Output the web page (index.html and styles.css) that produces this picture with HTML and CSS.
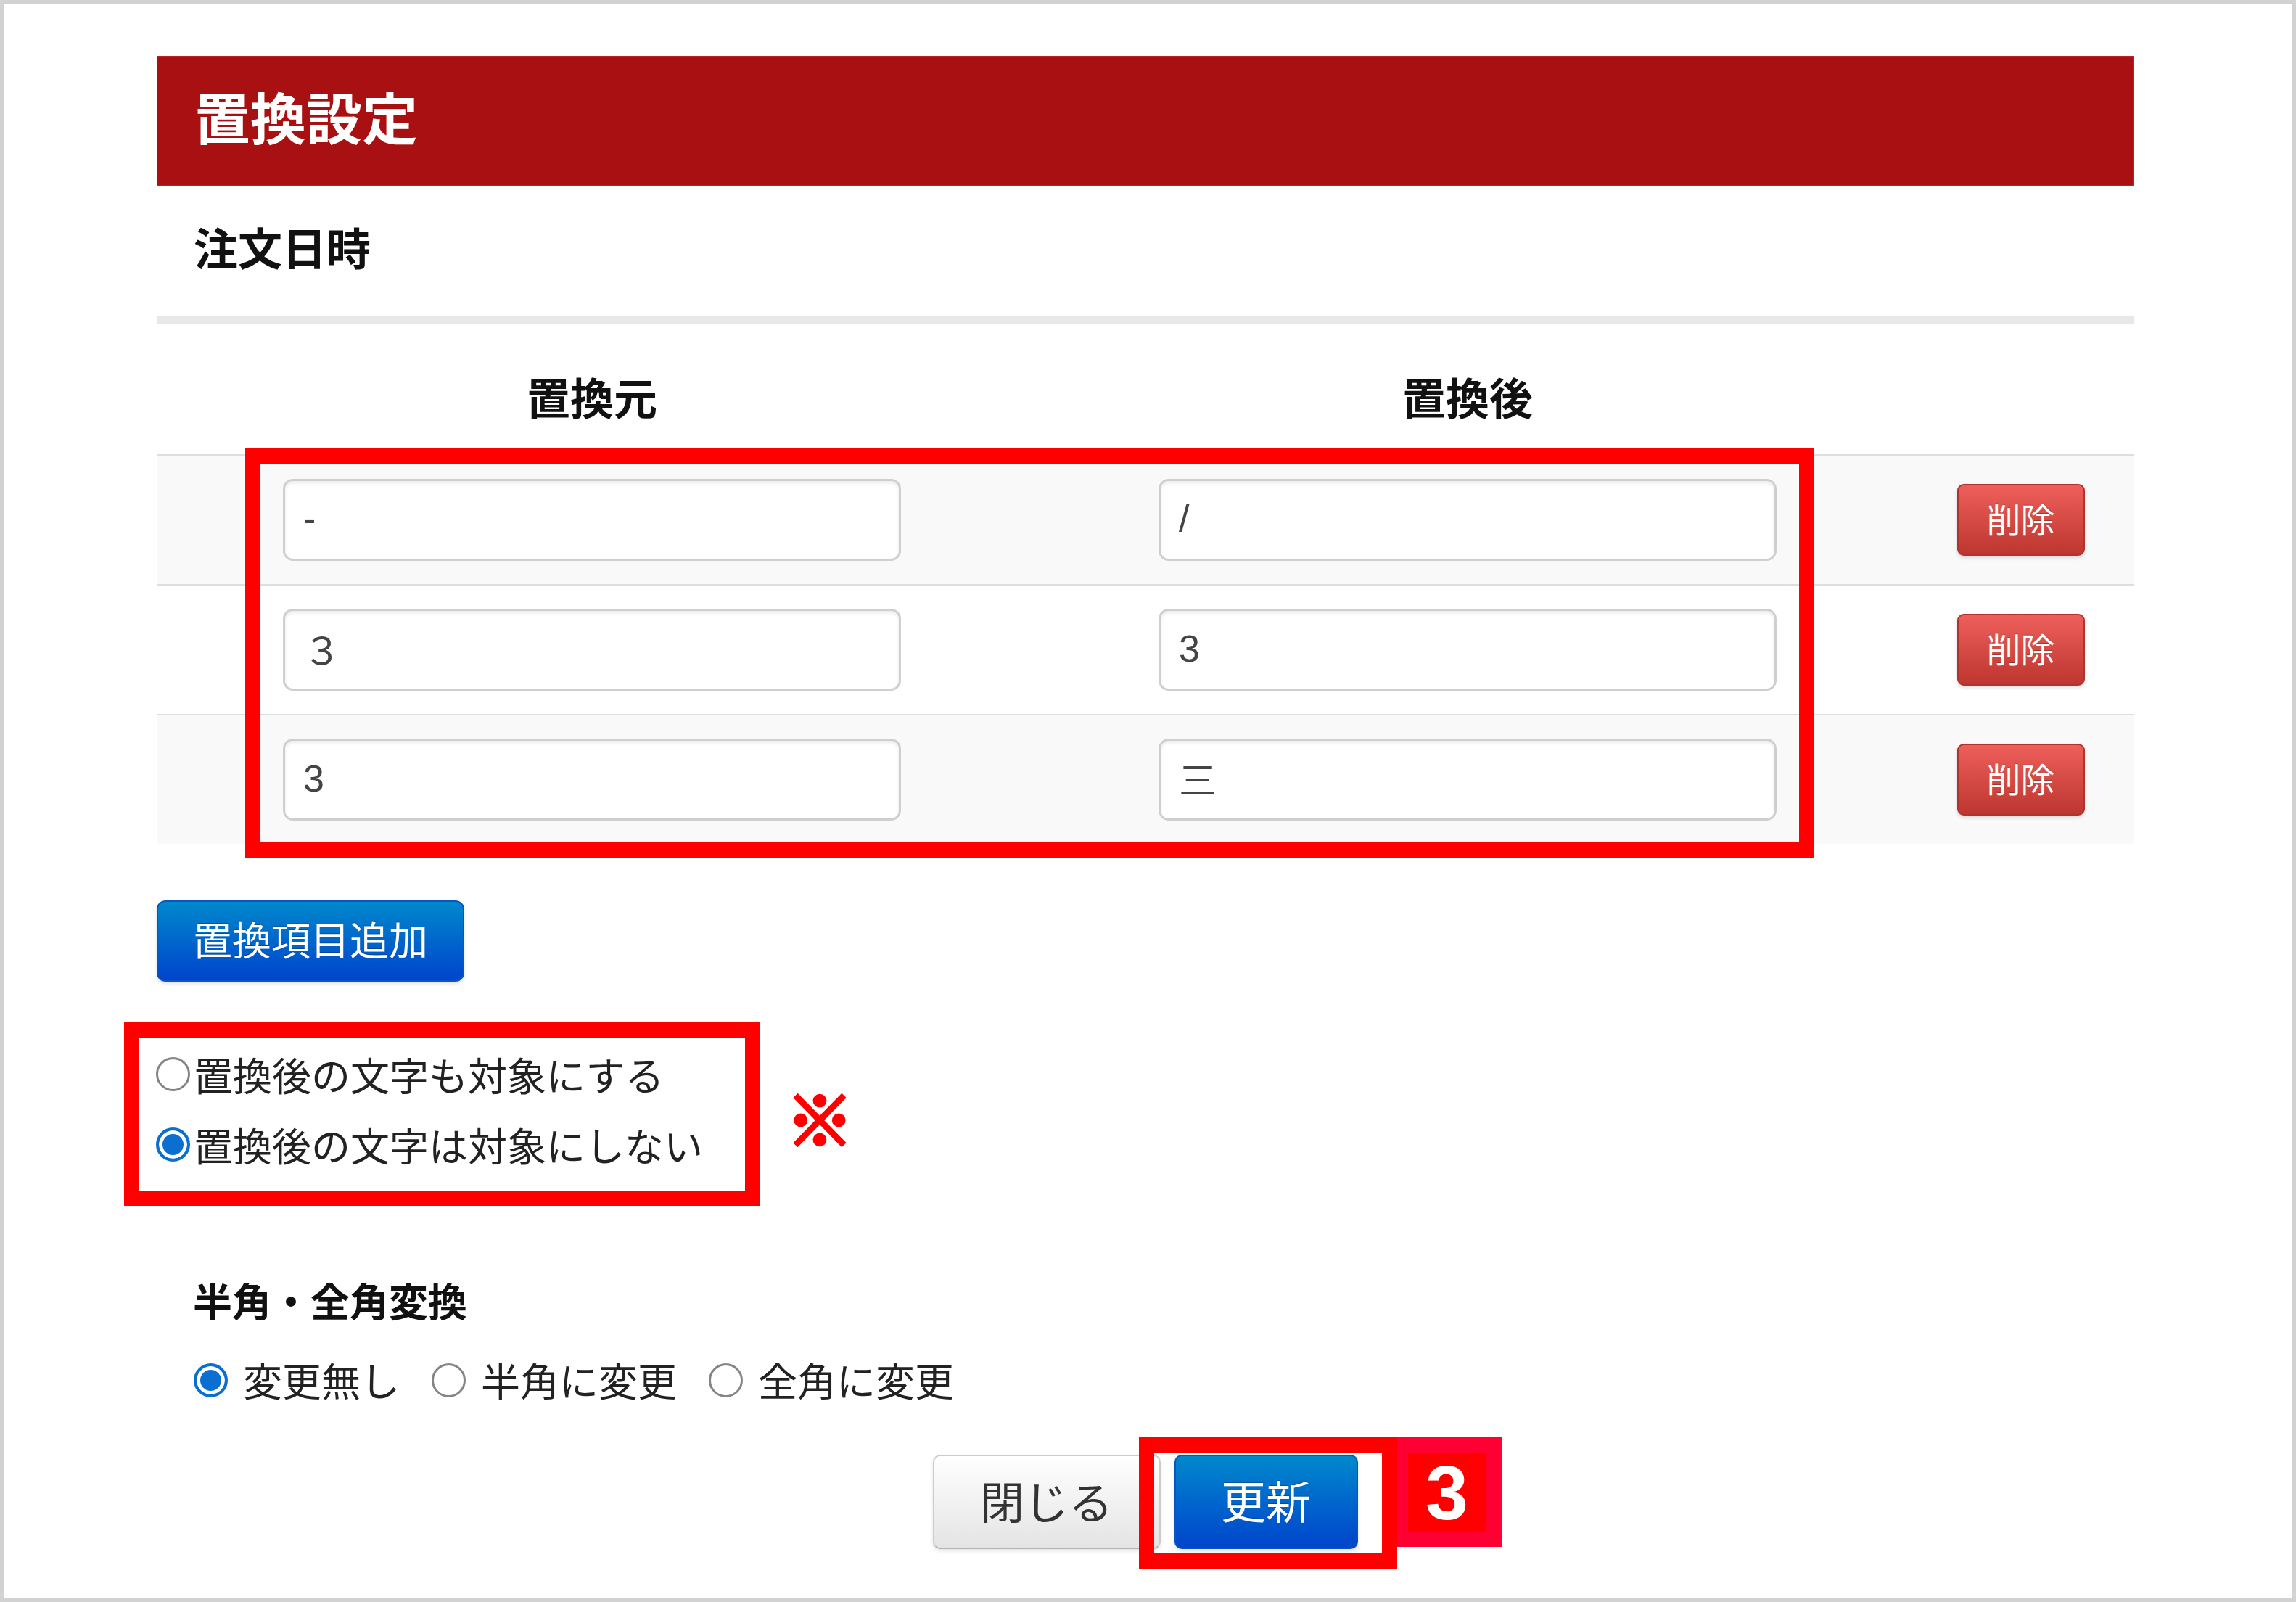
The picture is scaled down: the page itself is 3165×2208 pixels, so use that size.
FILE: index.html
```html
<!DOCTYPE html>
<html lang="ja">
<head>
<meta charset="utf-8">
<title>置換設定</title>
<link rel="stylesheet" href="styles.css">
</head>
<body>
<div class="page">
  <div class="dialog">
    <div class="title-bar"><h1 class="title">置換設定</h1></div>
    <div class="field-name">注文日時</div>
    <div class="sep"></div>

    <div class="replace-table">
      <div class="thead">
        <div class="th">置換元</div>
        <div class="th">置換後</div>
        <div class="th"></div>
      </div>
      <div class="rows">
        <div class="row striped">
          <div class="cell"><input class="txt" type="text" value="-"></div>
          <div class="cell"><input class="txt" type="text" value="/"></div>
          <div class="cell"><button class="btn btn-danger">削除</button></div>
        </div>
        <div class="row">
          <div class="cell"><input class="txt" type="text" value="３"></div>
          <div class="cell"><input class="txt" type="text" value="3"></div>
          <div class="cell"><button class="btn btn-danger">削除</button></div>
        </div>
        <div class="row striped">
          <div class="cell"><input class="txt" type="text" value="3"></div>
          <div class="cell"><input class="txt" type="text" value="三"></div>
          <div class="cell"><button class="btn btn-danger">削除</button></div>
        </div>
        <span class="annot-table"></span>
      </div>
    </div>

    <button class="btn btn-primary add">置換項目追加</button>

    <div class="option-wrap">
      <div class="annot-box">
        <label class="radio-line"><input class="radio" type="radio" name="target">置換後の文字も対象にする</label>
        <label class="radio-line"><input class="radio" type="radio" name="target" checked>置換後の文字は対象にしない</label>
      </div>
      <span class="kome">※</span>
    </div>

    <h2 class="sub">半角・全角変換</h2>
    <div class="radio-row">
      <label class="radio-opt"><input class="radio" type="radio" name="width" checked>変更無し</label>
      <label class="radio-opt"><input class="radio" type="radio" name="width">半角に変更</label>
      <label class="radio-opt"><input class="radio" type="radio" name="width">全角に変更</label>
    </div>

    <div class="actions">
      <button class="btn btn-default close">閉じる</button>
      <div class="update-wrap">
        <button class="btn btn-primary update">更新</button>
        <span class="annot-btn"></span>
        <span class="badge">3</span>
      </div>
    </div>
  </div>
</div>
</body>
</html>
```
FILE: styles.css
```css
html, body {
  margin: 0;
  padding: 0;
  background: #fff;
}

body {
  font-family: "Noto Sans CJK JP", "Noto Sans", sans-serif;
  color: #333;
}

.page {
  width: 3165px;
  height: 2208px;
  box-sizing: border-box;
  border: 5px solid #d2d2d2;
  background: #fff;
  overflow: hidden;
}

.dialog {
  margin-left: 211px;
  width: 2725px;
  padding-top: 72px;
}

.title-bar {
  height: 179px;
  box-sizing: border-box;
  background: #a81012;
  border: 1px solid #b8242a;
  display: flex;
  align-items: center;
  padding: 0 0 14px 51px;
}

.title {
  margin: 0;
  font-size: 77px;
  font-weight: 700;
  line-height: 1;
  color: #fff;
}

.field-name {
  height: 179px;
  box-sizing: border-box;
  display: flex;
  align-items: center;
  padding: 0 0 12px 51px;
  font-size: 61px;
  font-weight: 700;
  color: #111;
}

.sep {
  height: 11px;
  background: #e8e8e8;
}

.thead,
.row {
  display: grid;
  grid-template-columns: 1200px 1214px 1fr;
  align-items: center;
  justify-items: center;
}

.thead {
  height: 180px;
  box-sizing: border-box;
  padding-top: 20px;
}

.th {
  font-size: 60px;
  font-weight: 700;
  line-height: 1;
  color: #111;
}

.rows {
  position: relative;
}

.row {
  height: 179px;
  box-sizing: border-box;
  border-top: 2px solid #dedede;
  background: #fff;
}

.row.striped {
  background: #f9f9f9;
}

.cell {
  display: flex;
  align-items: center;
  justify-content: center;
}

.txt {
  width: 852px;
  height: 113px;
  box-sizing: border-box;
  border: 3px solid #cfcfcf;
  border-radius: 14px;
  padding: 0 25px 4px;
  margin: 0;
  font-family: "Liberation Sans", "Noto Sans CJK JP", sans-serif;
  font-size: 52px;
  color: #444;
  background: #fff;
  box-shadow: inset 0 3px 4px rgba(0, 0, 0, 0.08);
  outline: none;
}

.btn {
  margin: 0;
  padding: 0 0 6px;
  font-family: "Noto Sans CJK JP", sans-serif;
  line-height: 1;
  cursor: pointer;
  box-sizing: border-box;
}

.btn-danger {
  width: 176px;
  height: 99px;
  font-size: 47px;
  color: #fff;
  background: linear-gradient(#ee5f5b, #bd362f);
  border: 2px solid #b0332e;
  border-radius: 9px;
  box-shadow: 0 3px 5px rgba(0, 0, 0, 0.12);
  text-shadow: 0 -1px 0 rgba(0, 0, 0, 0.25);
}

.btn-primary {
  color: #fff;
  background: linear-gradient(#0088cc, #0044cc);
  border: 2px solid #0a55bf;
  text-shadow: 0 -1px 0 rgba(0, 0, 0, 0.25);
  box-shadow: 0 3px 5px rgba(0, 0, 0, 0.12);
}

.annot-table {
  position: absolute;
  left: 122px;
  top: -8px;
  width: 2163px;
  height: 564px;
  box-sizing: border-box;
  border: 21px solid #ff0000;
  pointer-events: none;
}

.add {
  display: block;
  margin-top: 78px;
  width: 424px;
  height: 112px;
  font-size: 54px;
  border-radius: 12px;
}

.option-wrap {
  display: flex;
  align-items: center;
  gap: 36px;
  margin-top: 56px;
  margin-left: -45px;
}

.annot-box {
  width: 877px;
  height: 253px;
  box-sizing: border-box;
  border: 21px solid #ff0000;
  padding: 2px 0 0 23px;
}

.radio-line {
  display: flex;
  align-items: center;
  gap: 5px;
  height: 97px;
  font-size: 54px;
  line-height: 1;
  color: #222;
  white-space: nowrap;
}

.kome {
  font-size: 92px;
  font-weight: 700;
  line-height: 1;
  color: #ff0000;
  -webkit-text-stroke: 5px #ff0000;
  padding-top: 6px;
}

.radio {
  -webkit-appearance: none;
  appearance: none;
  flex: none;
  margin: 0;
  width: 47px;
  height: 47px;
  box-sizing: border-box;
  border-radius: 50%;
  border: 3px solid #858585;
  background: #fff;
}

.radio:checked {
  border: 4px solid #0a6fd1;
  background: #0a6fd1;
  box-shadow: inset 0 0 0 5px #fff;
}

.sub {
  margin: 90px 0 0;
  padding-left: 50px;
  font-size: 54px;
  font-weight: 700;
  line-height: 80px;
  color: #111;
}

.radio-row {
  margin-top: 30px;
  height: 80px;
  display: flex;
  align-items: center;
  gap: 44px;
  padding-left: 51px;
}

.radio-opt {
  display: flex;
  align-items: center;
  gap: 21px;
  font-size: 54px;
  line-height: 1;
  color: #222;
  white-space: nowrap;
}

.actions {
  margin-top: 63px;
  display: flex;
  justify-content: center;
  gap: 19px;
}

.btn-default {
  width: 314px;
  height: 130px;
  font-size: 61px;
  color: #333;
  background: linear-gradient(#ffffff, #e4e4e4);
  border: 2px solid #cccccc;
  border-bottom-color: #b3b3b3;
  border-radius: 10px;
  box-shadow: 0 3px 5px rgba(0, 0, 0, 0.1);
}

.update-wrap {
  position: relative;
}

.update {
  width: 253px;
  height: 130px;
  font-size: 62px;
  border-radius: 10px;
}

.annot-btn {
  position: absolute;
  left: -49px;
  top: -24px;
  width: 356px;
  height: 181px;
  box-sizing: border-box;
  border: 21px solid #ff0000;
  pointer-events: none;
}

.badge {
  position: absolute;
  left: 307px;
  top: -24px;
  width: 144px;
  height: 151px;
  box-sizing: border-box;
  background: #ff0000;
  border-style: solid;
  border-color: #ff0033;
  border-width: 21px 21px 21px 15px;
  display: flex;
  align-items: center;
  justify-content: center;
  font-family: "Liberation Sans", sans-serif;
  font-weight: 700;
  font-size: 106px;
  line-height: 1;
  color: #fff;
}
```
